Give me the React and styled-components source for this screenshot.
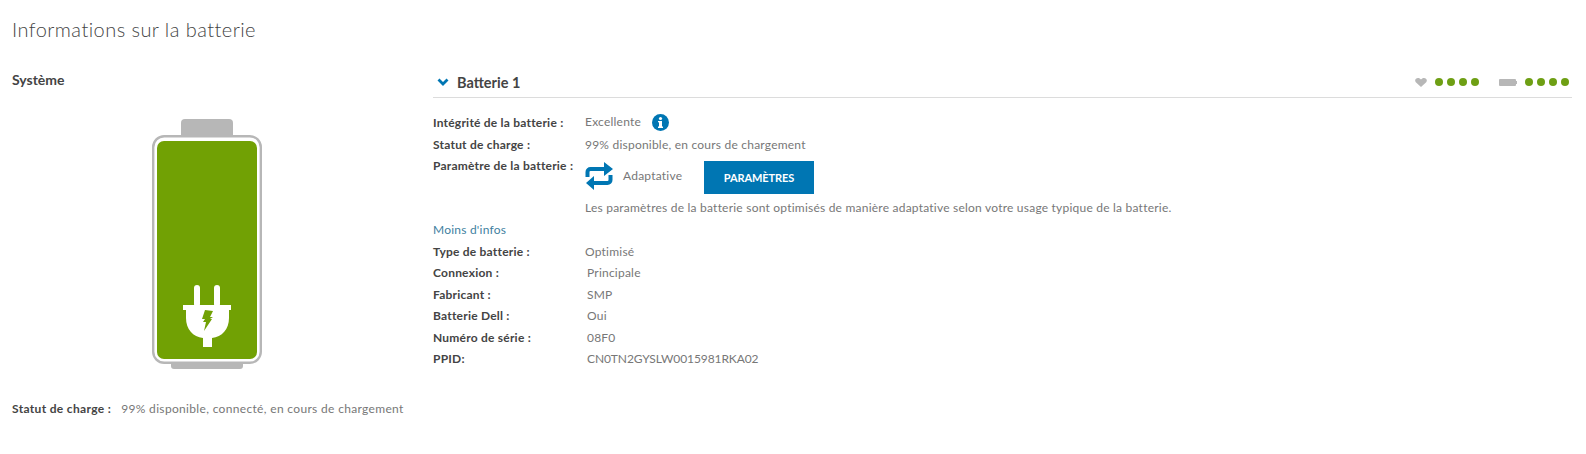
import React from 'react'
import styled, { createGlobalStyle } from 'styled-components'

const Global = createGlobalStyle`
  html, body { margin: 0; background: #fff; }
  body { font-family: Lato, "Open Sans", sans-serif; color: #777; }
`

const Page = styled.div`
  width: 1586px;
  height: 454px;
  box-sizing: border-box;
  padding: 17px 14px 0 12px;
  overflow: hidden;
`
const Title = styled.h1`
  margin: 0 0 30px;
  font-size: 20px;
  line-height: 24px;
  font-weight: 300;
  letter-spacing: 0.45px;
  color: #444;
`
const Columns = styled.div`
  display: flex;
`
const SystemCol = styled.section`
  width: 421px;
  flex: none;
`
const SystemName = styled.h2`
  margin: 0 0 30px;
  font-size: 14px;
  line-height: 18px;
  font-weight: 700;
  color: #444;
`
const BatteryArt = styled.svg`
  display: block;
  margin: 0 0 31px 140px;
`
const Label = styled.span`
  font-weight: 700;
  color: #444;
`
const Value = styled.span`
  color: #777;
`
const Serial = styled(Value)`
  letter-spacing: -0.1px;
`
const StatusLine = styled.div`
  display: flex;
  gap: 10px;
  font-size: 12px;
  line-height: 18px;
  letter-spacing: 0.33px;
  white-space: nowrap;
`
const BatteryCol = styled.section`
  flex: 1;
  min-width: 0;
`
const BatteryHeader = styled.header`
  display: flex;
  align-items: center;
  height: 22px;
  padding-bottom: 4px;
  border-bottom: 1px solid #dcdcdc;
`
const Chevron = styled.svg`
  margin: 0 8px 0 4px;
`
const BatteryName = styled.h3`
  margin: 0;
  flex: 1;
  font-size: 14.5px;
  font-weight: 700;
  color: #444;
`
const Gauges = styled.div`
  display: flex;
  align-items: center;
  gap: 20px;
  padding-right: 3px;
`
const Gauge = styled.div`
  display: flex;
  align-items: center;
  gap: 4px;
`
const GaugeIcon = styled.svg`
  margin-right: 4px;
`
const Dot = styled.i`
  display: block;
  width: 8px;
  height: 8px;
  border-radius: 50%;
  background: #6e9f14;
`
const Details = styled.div`
  padding-top: 14px;
  font-size: 12px;
  letter-spacing: 0.22px;
`
const Row = styled.div`
  display: grid;
  grid-template-columns: ${(p) => (p.$wide ? 154 : 152)}px 1fr;
  align-items: center;
  height: 21.4px;
  white-space: nowrap;
`
const InfoIcon = styled.svg`
  margin-left: 11px;
  vertical-align: -5px;
`
const SettingRow = styled.div`
  display: grid;
  grid-template-columns: 152px 1fr;
  white-space: nowrap;
`
const SettingLabel = styled(Label)`
  line-height: 18px;
  margin-top: 2px;
`
const SettingBody = styled.div`
  display: flex;
  flex-direction: column;
  padding-top: 6px;
`
const SettingTop = styled.div`
  display: flex;
  align-items: center;
  height: 33px;
`
const ModeIcon = styled.svg`
  margin-bottom: 3px;
`
const ModeName = styled(Value)`
  margin: 0 0 3px 10px;
  width: 81px;
`
const SettingsButton = styled.button`
  width: 110px;
  height: 33px;
  padding: 0;
  border: 0;
  background: #0076b3;
  color: #fff;
  font: 700 11px Lato, sans-serif;
  letter-spacing: -0.1px;
`
const Hint = styled.p`
  margin: 5px 0 0;
  line-height: 18px;
`
const LessLink = styled.a`
  display: block;
  margin: 4px 0 2px;
  line-height: 18px;
  color: #3f7f9f;
`

const Dots = () => (
  <>
    <Dot /><Dot /><Dot /><Dot />
  </>
)

const BatteryDrawing = () => (
  <BatteryArt width="110" height="250" viewBox="0 0 110 250">
    <path d="M29 17V4a4 4 0 0 1 4-4h44a4 4 0 0 1 4 4v13z" fill="#b7b7b7" />
    <path d="M19 244h72v3a3 3 0 0 1-3 3H22a3 3 0 0 1-3-3z" fill="#b7b7b7" />
    <rect x="1.2" y="17.2" width="107.6" height="226.6" rx="11" fill="#fff" stroke="#b7b7b7" strokeWidth="2.4" />
    <rect x="5" y="22" width="100" height="218" rx="7" fill="#71a104" />
    <g fill="#fff">
      <rect x="42" y="166" width="6" height="22" rx="3" />
      <rect x="62" y="166" width="6" height="22" rx="3" />
      <path d="M31 186h48v5h-2v8c0 11-7 19-17 20v9h-9v-9c-10-1-17-9-17-20v-8h-3z" />
    </g>
    <path d="M53 191l8 1-3 6 3 0-3 2 2 0-8 12 2-9-3 0 2-3-3 0z" fill="#71a104" />
  </BatteryArt>
)

export default function App() {
  return (
    <Page>
      <Global />
      <Title>Informations sur la batterie</Title>
      <Columns>
        <SystemCol>
          <SystemName>Système</SystemName>
          <BatteryDrawing />
          <StatusLine>
            <Label>Statut de charge :</Label>
            <Value>99% disponible, connecté, en cours de chargement</Value>
          </StatusLine>
        </SystemCol>
        <BatteryCol>
          <BatteryHeader>
            <Chevron width="12" height="8" viewBox="0 0 12 8">
              <path d="M1.500 1.500L6 6l4.500-4.500" fill="none" stroke="#0076b3" strokeWidth="2.800" />
            </Chevron>
            <BatteryName>Batterie 1</BatteryName>
            <Gauges>
              <Gauge>
                <GaugeIcon width="12" height="9" viewBox="0 0 12 9">
                  <path d="M6 9L.8 4.200C-.8 2 .8 0 3 0c1.300 0 2.300.6 3 1.600C6.700.6 7.700 0 9 0c2.200 0 3.800 2 2.200 4.200z" fill="#b7b7b7" />
                </GaugeIcon>
                <Dots />
              </Gauge>
              <Gauge>
                <GaugeIcon width="18" height="7" viewBox="0 0 18 7">
                  <path d="M1 0h15a1 1 0 0 1 1 1v1h1v3h-1v1a1 1 0 0 1-1 1H1a1 1 0 0 1-1-1V1a1 1 0 0 1 1-1z" fill="#b7b7b7" />
                </GaugeIcon>
                <Dots />
              </Gauge>
            </Gauges>
          </BatteryHeader>
          <Details>
            <Row>
              <Label>Intégrité de la batterie :</Label>
              <Value>
                Excellente
                <InfoIcon width="17" height="17" viewBox="0 0 17 17">
                  <circle cx="8.500" cy="8.500" r="8.500" fill="#0076b3" />
                  <rect x="7" y="7" width="3" height="6.500" fill="#fff" />
                  <rect x="6" y="12.500" width="5" height="1.500" fill="#fff" />
                  <rect x="6" y="7" width="2" height="1.300" fill="#fff" />
                  <circle cx="8.500" cy="4.500" r="1.600" fill="#fff" />
                </InfoIcon>
              </Value>
            </Row>
            <Row>
              <Label>Statut de charge :</Label>
              <Value>99% disponible, en cours de chargement</Value>
            </Row>
            <SettingRow>
              <SettingLabel>Paramètre de la batterie :</SettingLabel>
              <SettingBody>
                <SettingTop>
                  <ModeIcon width="28" height="28" viewBox="0 0 28 28">
                    <path d="M2.500 15V10a3 3 0 0 1 3-3H20M25.500 13v5a3 3 0 0 1-3 3H8" fill="none" stroke="#0076b3" strokeWidth="4" />
                    <path d="M19 0l9 7-9 7zM9 14l-8 7 8 7z" fill="#0076b3" />
                  </ModeIcon>
                  <ModeName>Adaptative</ModeName>
                  <SettingsButton>PARAMÈTRES</SettingsButton>
                </SettingTop>
                <Hint>Les paramètres de la batterie sont optimisés de manière adaptative selon votre usage typique de la batterie.</Hint>
              </SettingBody>
            </SettingRow>
            <LessLink>Moins d'infos</LessLink>
            <Row>
              <Label>Type de batterie :</Label>
              <Value>Optimisé</Value>
            </Row>
            <Row $wide>
              <Label>Connexion :</Label>
              <Value>Principale</Value>
            </Row>
            <Row $wide>
              <Label>Fabricant :</Label>
              <Value>SMP</Value>
            </Row>
            <Row $wide>
              <Label>Batterie Dell :</Label>
              <Value>Oui</Value>
            </Row>
            <Row $wide>
              <Label>Numéro de série :</Label>
              <Value>08F0</Value>
            </Row>
            <Row $wide>
              <Label>PPID:</Label>
              <Serial>CN0TN2GYSLW0015981RKA02</Serial>
            </Row>
          </Details>
        </BatteryCol>
      </Columns>
    </Page>
  )
}
